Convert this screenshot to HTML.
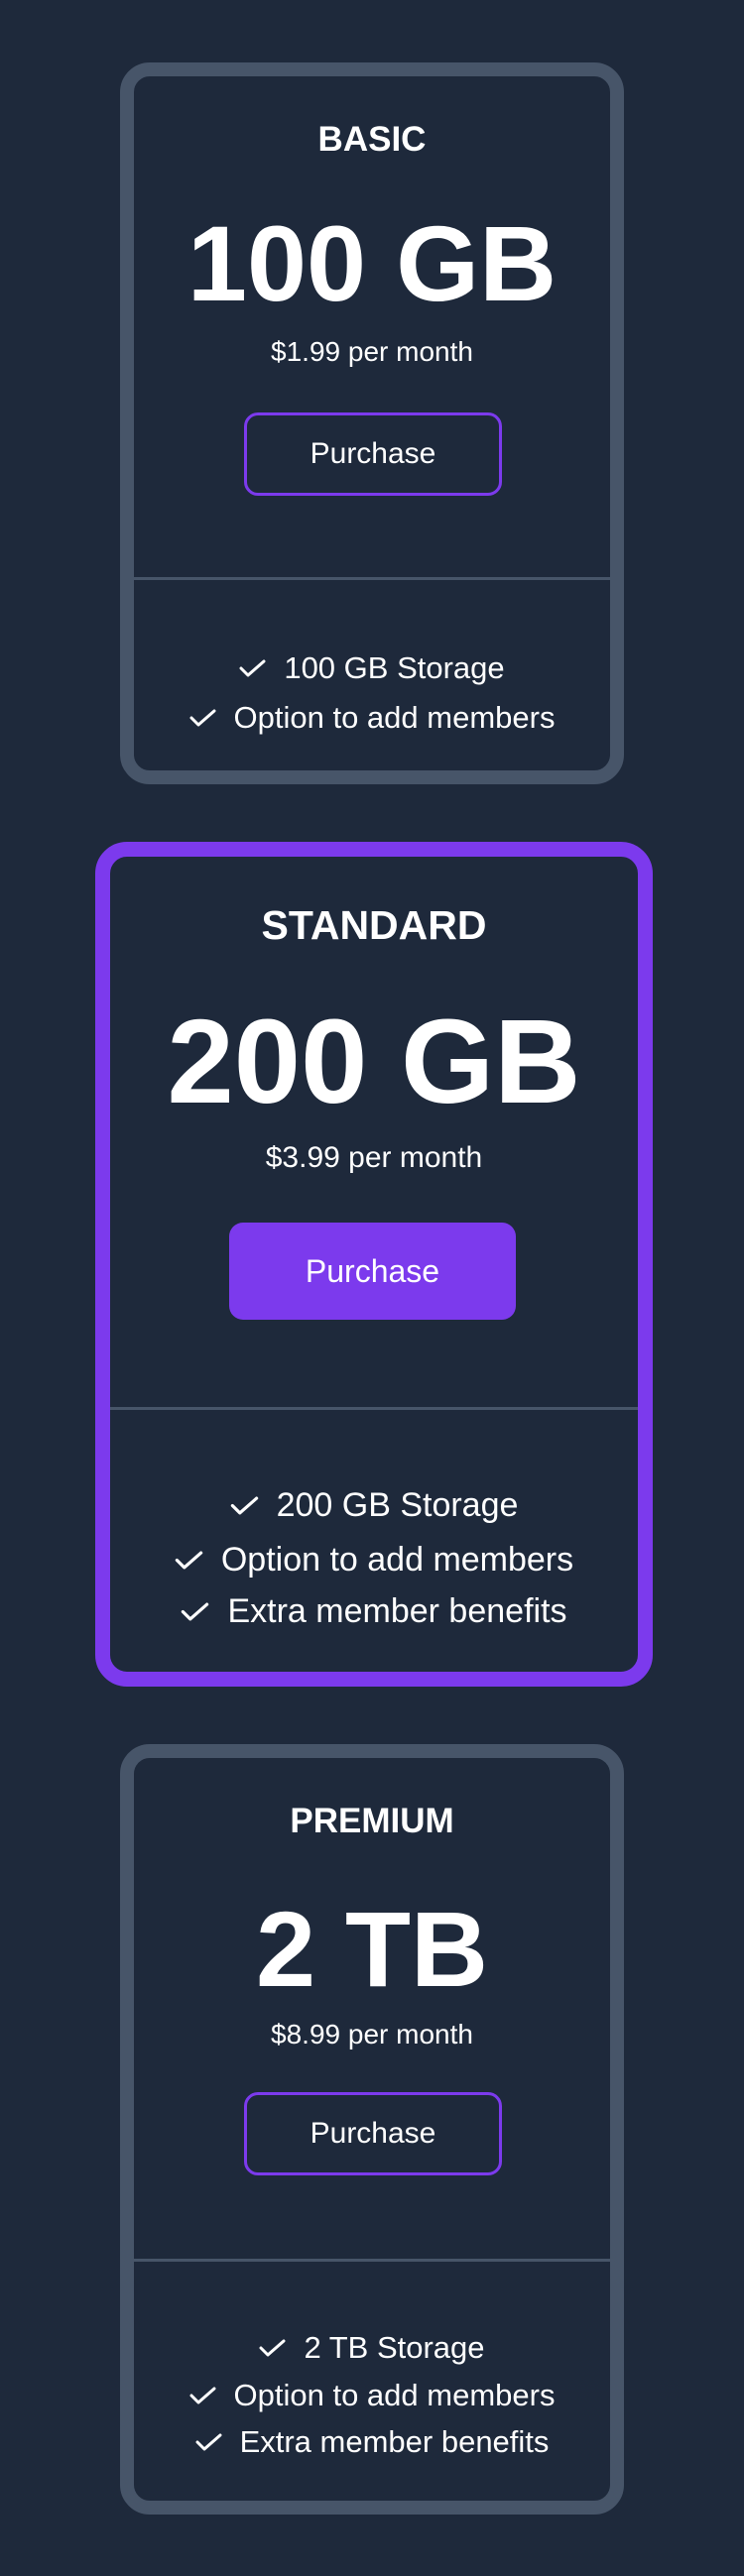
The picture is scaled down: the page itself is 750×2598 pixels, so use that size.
<!DOCTYPE html>
<html><head><meta charset="utf-8"><style>
*{margin:0;padding:0;box-sizing:border-box}
body{width:750px;height:2598px;background:#1e293b;position:relative;overflow:hidden;font-family:"Liberation Sans",sans-serif;color:#fff}
.card{position:absolute;background:#1e293b;border-style:solid;border-color:#475569}
.t{position:absolute;left:0;right:0;text-align:center;white-space:nowrap}
.div{position:absolute;left:0;right:0;height:3px;background:#475569}
.btn{position:absolute;border:3px solid #7c3aed;border-radius:14px;display:flex;align-items:center;justify-content:center}
.f{position:absolute;left:0;right:0;display:flex;justify-content:center;align-items:center;white-space:nowrap}
.f svg{margin-right:18px;flex:none}
</style></head><body>

<!-- Card 1 -->
<div class="card" style="left:121px;top:63px;width:508px;height:728px;border-width:14px;border-radius:30px">
  <div class="t" style="top:39px;height:50px;line-height:50px;font-size:35px;font-weight:bold">BASIC</div>
  <div class="t" style="top:124px;height:130px;line-height:130px;font-size:108px;font-weight:bold">100 GB</div>
  <div class="t" style="top:261px;height:34px;line-height:34px;font-size:28px">$1.99 per month</div>
  <div class="btn" style="left:111px;top:339px;width:260px;height:84px;font-size:30px">Purchase</div>
  <div class="div" style="top:505px"></div>
  <div class="f" style="top:577px;height:40px;font-size:31px"><svg width="27" height="18" viewBox="0 0 27 18"><path d="M2 9 L9 16 L25 2" fill="none" stroke="#fff" stroke-width="3" stroke-linecap="round" stroke-linejoin="round"/></svg>100 GB Storage</div>
  <div class="f" style="top:627px;height:40px;font-size:31px"><svg width="27" height="18" viewBox="0 0 27 18"><path d="M2 9 L9 16 L25 2" fill="none" stroke="#fff" stroke-width="3" stroke-linecap="round" stroke-linejoin="round"/></svg>Option to add members</div>
</div>

<!-- Card 2 -->
<div class="card" style="left:96px;top:849px;width:562px;height:852px;border-width:15px;border-color:#7c3aed;border-radius:32px">
  <div class="t" style="top:44px;height:50px;line-height:50px;font-size:41px;font-weight:bold">STANDARD</div>
  <div class="t" style="top:136px;height:140px;line-height:140px;font-size:121px;font-weight:bold">200 GB</div>
  <div class="t" style="top:284px;height:40px;line-height:40px;font-size:30px">$3.99 per month</div>
  <div class="btn" style="left:120px;top:369px;width:289px;height:98px;background:#7c3aed;border:none;border-radius:14px;font-size:32px">Purchase</div>
  <div class="div" style="top:555px"></div>
  <div class="f" style="top:632px;height:44px;font-size:34px"><svg width="29" height="19" viewBox="0 0 27 18"><path d="M2 9 L9 16 L25 2" fill="none" stroke="#fff" stroke-width="3" stroke-linecap="round" stroke-linejoin="round"/></svg>200 GB Storage</div>
  <div class="f" style="top:687px;height:44px;font-size:34px"><svg width="29" height="19" viewBox="0 0 27 18"><path d="M2 9 L9 16 L25 2" fill="none" stroke="#fff" stroke-width="3" stroke-linecap="round" stroke-linejoin="round"/></svg>Option to add members</div>
  <div class="f" style="top:739px;height:44px;font-size:34px"><svg width="29" height="19" viewBox="0 0 27 18"><path d="M2 9 L9 16 L25 2" fill="none" stroke="#fff" stroke-width="3" stroke-linecap="round" stroke-linejoin="round"/></svg>Extra member benefits</div>
</div>

<!-- Card 3 -->
<div class="card" style="left:121px;top:1759px;width:508px;height:777px;border-width:14px;border-radius:30px">
  <div class="t" style="top:39px;height:50px;line-height:50px;font-size:35px;font-weight:bold">PREMIUM</div>
  <div class="t" style="top:128px;height:130px;line-height:130px;font-size:108px;font-weight:bold">2 TB</div>
  <div class="t" style="top:262px;height:34px;line-height:34px;font-size:28px">$8.99 per month</div>
  <div class="btn" style="left:111px;top:337px;width:260px;height:84px;font-size:30px">Purchase</div>
  <div class="div" style="top:505px"></div>
  <div class="f" style="top:575px;height:40px;font-size:31px"><svg width="27" height="18" viewBox="0 0 27 18"><path d="M2 9 L9 16 L25 2" fill="none" stroke="#fff" stroke-width="3" stroke-linecap="round" stroke-linejoin="round"/></svg>2 TB Storage</div>
  <div class="f" style="top:623px;height:40px;font-size:31px"><svg width="27" height="18" viewBox="0 0 27 18"><path d="M2 9 L9 16 L25 2" fill="none" stroke="#fff" stroke-width="3" stroke-linecap="round" stroke-linejoin="round"/></svg>Option to add members</div>
  <div class="f" style="top:670px;height:40px;font-size:31px"><svg width="27" height="18" viewBox="0 0 27 18"><path d="M2 9 L9 16 L25 2" fill="none" stroke="#fff" stroke-width="3" stroke-linecap="round" stroke-linejoin="round"/></svg>Extra member benefits</div>
</div>

</body></html>
